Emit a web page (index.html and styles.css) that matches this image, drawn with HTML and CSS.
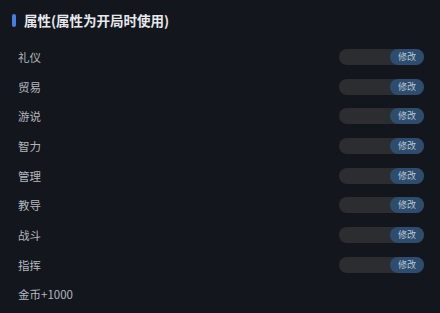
FILE: index.html
```html
<!DOCTYPE html>
<html lang="zh-CN">
<head>
    <meta charset="UTF-8">
    <title>属性</title>
    <link rel="stylesheet" href="styles.css">
</head>
<body>
    <div class="panel">
        <div class="title">
            <span class="mark"></span>
            <span class="title-text">属性(属性为开局时使用)</span>
        </div>
        <div class="row"><span class="label">礼仪</span><div class="field"><span class="btn">修改</span></div></div>
        <div class="row"><span class="label">贸易</span><div class="field"><span class="btn">修改</span></div></div>
        <div class="row"><span class="label">游说</span><div class="field"><span class="btn">修改</span></div></div>
        <div class="row"><span class="label">智力</span><div class="field"><span class="btn">修改</span></div></div>
        <div class="row"><span class="label">管理</span><div class="field"><span class="btn">修改</span></div></div>
        <div class="row"><span class="label">教导</span><div class="field"><span class="btn">修改</span></div></div>
        <div class="row"><span class="label">战斗</span><div class="field"><span class="btn">修改</span></div></div>
        <div class="row"><span class="label">指挥</span><div class="field"><span class="btn">修改</span></div></div>
        <div class="row"><span class="label">金币+1000</span></div>
    </div>
</body>
</html>
```

FILE: styles.css
```css
html, body {
    margin: 0;
    padding: 0;
    background: #13161d;
}

body {
    width: 440px;
    height: 313px;
    overflow: hidden;
    font-family: "Noto Sans CJK SC", "Noto Sans", sans-serif;
}

.panel {
    padding: 12px 16px 0 12px;
}

.title {
    display: flex;
    align-items: center;
    height: 16px;
    margin-bottom: 14px;
}

.mark {
    width: 4px;
    height: 13px;
    border-radius: 2px;
    background: #3f7fe6;
    margin-right: 8px;
}

.title-text {
    color: #e6e8ec;
    font-size: 13.5px;
    font-weight: bold;
    line-height: 16px;
}

.row {
    display: flex;
    align-items: center;
    justify-content: space-between;
    height: 29.7px;
    padding-left: 6px;
}

.label {
    color: #b4b8bf;
    font-size: 11.5px;
}

.field {
    width: 85px;
    height: 16px;
    border-radius: 8px;
    background: #2b2d31;
    display: flex;
    justify-content: flex-end;
}

.btn {
    width: 34px;
    height: 16px;
    border-radius: 8px;
    background: #2e4d6e;
    color: #b9c6d6;
    font-size: 9px;
    line-height: 16px;
    text-align: center;
}
```
